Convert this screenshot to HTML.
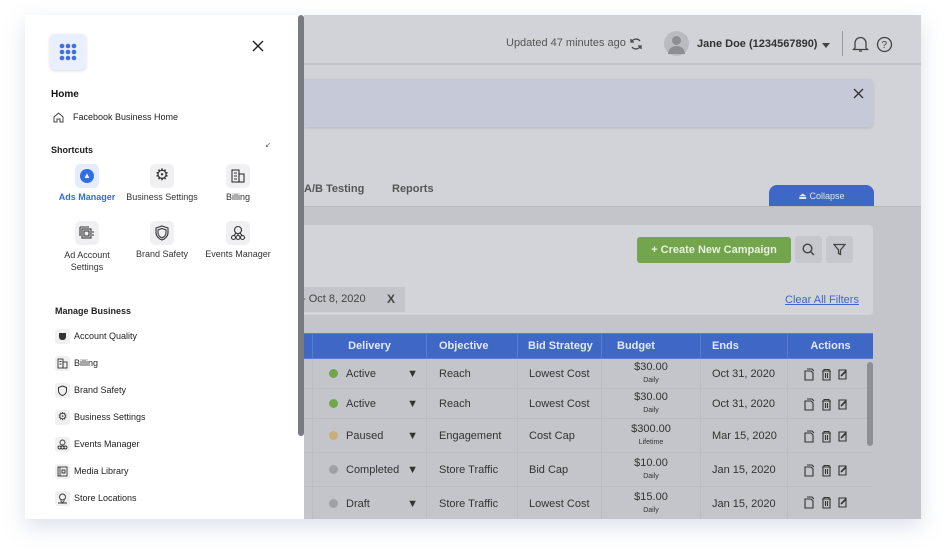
<!DOCTYPE html><html><head><style>
*{margin:0;padding:0;box-sizing:border-box}
body{width:947px;height:554px;background:#fff;font-family:"Liberation Sans",sans-serif;position:relative;overflow:hidden}
.a{position:absolute}
.win{left:25px;top:15px;width:896px;height:504px;background:#d2d3d9;box-shadow:0 8px 20px rgba(120,140,180,.25);overflow:hidden}
.side{left:25px;top:15px;width:279px;height:504px;background:#fff}
.ico{width:24px;height:24px;background:#f0f0f2;border-radius:5px}
.sm{width:15px;height:15px;background:#f0f0f2;border-radius:3px}
.tw{left:300px;top:333px;width:573px;height:186px;overflow:hidden}
table{border-collapse:collapse;table-layout:fixed;width:573px;font-size:11px;color:#333}
th,td{border:1px solid #bcbdc4;overflow:hidden;white-space:nowrap}
th{background:#3f67c6;color:#e3e8f5;height:25px;font-weight:bold;border-color:#5a7bd0;padding:0}
td{height:30px;text-align:left;padding:0 0 0 12px}
.dot{display:inline-block;width:9px;height:9px;border-radius:50%;margin-right:8px;vertical-align:-1px}
.b{text-align:center;padding:0;font-size:11px;line-height:11px}
.b small{font-size:7px;display:block;margin-top:2px}
</style></head><body>
<div class="a win"></div>
<!-- top bar -->
<div class="a" style="left:304px;top:63px;width:617px;height:2px;background:#c3c4ca"></div>
<div class="a" style="left:506px;top:37px;font-size:11px;color:#555">Updated 47 minutes ago</div>
<svg class="a" style="left:629px;top:37px" width="14" height="14" viewBox="0 0 14 14" fill="none" stroke="#444" stroke-width="1.3"><path d="M11 4A5 5 0 0 0 2.5 5M3 10A5 5 0 0 0 11.5 9"/><path d="M2 2v3h3M12 12V9H9"/></svg>
<div class="a" style="left:664px;top:31px;width:25px;height:25px;border-radius:50%;background:#babbc1;overflow:hidden"></div>
<div class="a" style="left:672px;top:36px;width:9px;height:9px;border-radius:50%;background:#8d8e94"></div>
<div class="a" style="left:668px;top:46px;width:17px;height:8px;border-radius:8px 8px 0 0;background:#8d8e94"></div>
<div class="a" style="left:697px;top:38px;font-size:11px;color:#333;font-weight:bold">Jane Doe (1234567890)</div>
<div class="a" style="left:822px;top:43px;border:4px solid transparent;border-top:5px solid #444"></div>
<div class="a" style="left:842px;top:31px;width:1px;height:25px;background:#999"></div>
<svg class="a" style="left:852px;top:35px" width="17" height="18" viewBox="0 0 17 18" fill="none" stroke="#444" stroke-width="1.3"><path d="M3 13V8a5.5 5.5 0 0 1 11 0v5l1.5 1.5h-14z"/><path d="M7 16h3"/></svg>
<svg class="a" style="left:876px;top:36px" width="17" height="17" viewBox="0 0 17 17" fill="none" stroke="#444" stroke-width="1.3"><circle cx="8.5" cy="8.5" r="7"/><text x="5.5" y="12" font-size="10" fill="#444" stroke="none" font-family="Liberation Sans">?</text></svg>
<!-- banner -->
<div class="a" style="left:304px;top:79px;width:569px;height:48px;background:#c5c9d8;border-radius:0 4px 4px 0;box-shadow:0 1px 3px rgba(0,0,0,.12)"></div>
<svg class="a" style="left:853px;top:88px" width="11" height="11" stroke="#333" stroke-width="1.3"><path d="M1 1l9 9M10 1L1 10"/></svg>
<!-- tabs -->
<div class="a" style="left:304px;top:183px;font-size:11px;color:#555;font-weight:bold">A/B Testing</div>
<div class="a" style="left:392px;top:183px;font-size:11px;color:#555;font-weight:bold">Reports</div>
<div class="a" style="left:769px;top:185px;width:105px;height:22px;background:#3f67c6;border-radius:8px 8px 0 0;color:#dfe5f3;font-size:9px;text-align:center;line-height:22px">⏏ Collapse</div>
<div class="a" style="left:304px;top:206px;width:617px;height:313px;background:#c4c5ca;border-top:1px solid #b9babf"></div>
<div class="a" style="left:304px;top:225px;width:569px;height:90px;background:#d3d4da;border-radius:0 4px 4px 0"></div>
<div class="a" style="left:637px;top:237px;width:154px;height:26px;background:#72a54c;border-radius:3px;color:#e8f0e0;font-size:11px;font-weight:bold;text-align:center;line-height:26px">+ Create New Campaign</div>
<div class="a" style="left:795px;top:236px;width:27px;height:27px;background:#c6c7cc;border-radius:3px"></div>
<svg class="a" style="left:802px;top:243px" width="13" height="13" fill="none" stroke="#444" stroke-width="1.4"><circle cx="5.5" cy="5.5" r="4.3"/><path d="M8.5 8.5l3.5 3.5"/></svg>
<div class="a" style="left:826px;top:236px;width:27px;height:27px;background:#c6c7cc;border-radius:3px"></div>
<svg class="a" style="left:833px;top:243px" width="13" height="13" fill="none" stroke="#444" stroke-width="1.3"><path d="M1 1.5h11L7.5 7v4.5l-2-1V7z"/></svg>
<div class="a" style="left:304px;top:287px;width:101px;height:25px;background:#c4c5ca"></div>
<div class="a" style="left:302px;top:293px;font-size:11px;color:#444">- Oct 8, 2020</div>
<div class="a" style="left:387px;top:292px;font-size:12px;color:#444;font-weight:bold">X</div>
<div class="a" style="left:785px;top:294px;font-size:11px;color:#3f67c6;text-decoration:underline">Clear All Filters</div>
<!-- table -->
<div class="a tw">
<table>
<colgroup><col style="width:12px"><col style="width:114px"><col style="width:91px"><col style="width:84px"><col style="width:99px"><col style="width:87px"><col style="width:86px"></colgroup>
<tr><th></th><th>Delivery</th><th style="text-align:left;padding-left:12px">Objective</th><th style="text-align:left;padding-left:10px">Bid Strategy</th><th style="text-align:left;padding-left:15px">Budget</th><th style="text-align:left;padding-left:11px">Ends</th><th>Actions</th></tr>
<tr><td></td><td style="padding-left:16px"><span class="dot" style="background:#72a54c"></span>Active<span style="float:right;margin-right:8px">▼</span></td><td>Reach</td><td style="padding-left:11px">Lowest Cost</td><td class="b">$30.00<small>Daily</small></td><td style="padding-left:11px">Oct 31, 2020</td><td></td></tr>
<tr><td></td><td style="padding-left:16px"><span class="dot" style="background:#72a54c"></span>Active<span style="float:right;margin-right:8px">▼</span></td><td>Reach</td><td style="padding-left:11px">Lowest Cost</td><td class="b">$30.00<small>Daily</small></td><td style="padding-left:11px">Oct 31, 2020</td><td></td></tr>
<tr><td style="height:34px"></td><td style="padding-left:16px"><span class="dot" style="background:#c9ad7a"></span>Paused<span style="float:right;margin-right:8px">▼</span></td><td>Engagement</td><td style="padding-left:11px">Cost Cap</td><td class="b">$300.00<small>Lifetime</small></td><td style="padding-left:11px">Mar 15, 2020</td><td></td></tr>
<tr><td style="height:34px"></td><td style="padding-left:16px"><span class="dot" style="background:#a0a1a6"></span>Completed<span style="float:right;margin-right:8px">▼</span></td><td>Store Traffic</td><td style="padding-left:11px">Bid Cap</td><td class="b">$10.00<small>Daily</small></td><td style="padding-left:11px">Jan 15, 2020</td><td></td></tr>
<tr><td style="height:34px"></td><td style="padding-left:16px"><span class="dot" style="background:#a0a1a6"></span>Draft<span style="float:right;margin-right:8px">▼</span></td><td>Store Traffic</td><td style="padding-left:11px">Lowest Cost</td><td class="b">$15.00<small>Daily</small></td><td style="padding-left:11px">Jan 15, 2020</td><td></td></tr>
</table>
</div>
<div class="a" style="left:867px;top:362px;width:6px;height:84px;background:#8e8f94;border-radius:3px"></div>
<div class="a" style="left:873px;top:333px;width:48px;height:186px;background:#c4c5ca"></div>
<div id="acts"></div>
<script>
var ys=[374,404,436,470,502],h='';
ys.forEach(function(y){
h+='<svg class="a" style="left:803px;top:'+(y-6)+'px" width="48" height="13" fill="none" stroke="#333" stroke-width="1.1"><path d="M2 3h6l2 2v7H2z M4 1h5l2 2"/><path d="M19 3h9M21 3V1.5h5V3M20 3v9h7V3M22.5 5v5M24.5 5v5"/><path d="M36 2h7v9h-7z"/><path d="M38 8l5-5" stroke-width="1.6"/></svg>';});
document.getElementById('acts').innerHTML=h;
</script>
<!-- sidebar -->
<div class="a side"></div>
<div class="a" style="left:298px;top:15px;width:6px;height:421px;background:#7a7b80;border-radius:3px"></div>
<div class="a" style="left:50px;top:34px;width:36px;height:36px;background:#e9effc;border-radius:5px;box-shadow:0 1px 3px rgba(0,0,0,.15)"></div>
<svg class="a" style="left:58px;top:42px" width="20" height="20" fill="#3f6fe0"><circle cx="4" cy="4" r="2.3"/><circle cx="10" cy="4" r="2.3"/><circle cx="16" cy="4" r="2.3"/><circle cx="4" cy="10" r="2.3"/><circle cx="10" cy="10" r="2.3"/><circle cx="16" cy="10" r="2.3"/><circle cx="4" cy="16" r="2.3"/><circle cx="10" cy="16" r="2.3"/><circle cx="16" cy="16" r="2.3"/></svg>
<svg class="a" style="left:252px;top:40px" width="12" height="12" stroke="#222" stroke-width="1.4"><path d="M1 1l10 10M11 1L1 11"/></svg>
<div class="a" style="left:51px;top:89px;font-size:10px;font-weight:bold;color:#111">Home</div>
<svg class="a" style="left:53px;top:112px" width="11" height="11" fill="none" stroke="#444" stroke-width="1"><path d="M1 10V5l4.5-4L10 5v5H7V7H4v3z"/></svg>
<div class="a" style="left:73px;top:112px;font-size:9px;color:#222">Facebook Business Home</div>
<div class="a" style="left:51px;top:145px;font-size:9px;font-weight:bold;color:#222">Shortcuts</div>
<div class="a ico" style="left:75px;top:164px;background:#e5ecfb"></div>
<div class="a" style="left:80px;top:169px;width:14px;height:14px;border-radius:50%;background:#2f6ee6;color:#fff;font-size:8px;text-align:center;line-height:14px;font-weight:bold">▲</div>
<div class="a" style="left:48px;top:192px;width:78px;text-align:center;font-size:9px;font-weight:bold;color:#2f6ee6">Ads Manager</div>
<div class="a ico" style="left:150px;top:164px"></div><div class="a" style="left:150px;top:164px;width:24px;text-align:center;font-size:16px;line-height:24px;color:#333">⚙</div>
<div class="a" style="left:122px;top:192px;width:80px;text-align:center;font-size:9px;color:#333">Business Settings</div>
<div class="a ico" style="left:226px;top:164px"></div>
<svg class="a" style="left:230px;top:168px" width="16" height="16" fill="none" stroke="#333" stroke-width="1.1"><rect x="2" y="2" width="7" height="12"/><path d="M4 5h3M4 8h3M4 11h3"/><rect x="9" y="6" width="5" height="8"/></svg>
<div class="a" style="left:198px;top:192px;width:80px;text-align:center;font-size:9px;color:#333">Billing</div>
<div class="a ico" style="left:75px;top:221px"></div>
<svg class="a" style="left:79px;top:225px" width="16" height="16" fill="none" stroke="#333" stroke-width="1.1"><rect x="3" y="4" width="9" height="9"/><rect x="5" y="6" width="5" height="5"/><path d="M1 2h9M1 2v9M13 7h2M13 10h2"/></svg>
<div class="a" style="left:48px;top:249px;width:78px;text-align:center;font-size:9px;color:#333;line-height:12px">Ad Account<br>Settings</div>
<div class="a ico" style="left:150px;top:221px"></div>
<svg class="a" style="left:154px;top:225px" width="16" height="16" fill="none" stroke="#333" stroke-width="1.1"><path d="M8 1l6 2v5c0 3-3 6-6 7-3-1-6-4-6-7V3z"/><path d="M8 3.5l4 1.4v3.2c0 2-2 4-4 4.8-2-.8-4-2.8-4-4.8V4.9z"/></svg>
<div class="a" style="left:122px;top:249px;width:80px;text-align:center;font-size:9px;color:#333">Brand Safety</div>
<div class="a ico" style="left:226px;top:221px"></div>
<svg class="a" style="left:230px;top:225px" width="16" height="16" fill="none" stroke="#333" stroke-width="1.1"><circle cx="8" cy="5" r="3.5"/><circle cx="3.5" cy="12.5" r="2"/><circle cx="8" cy="12.5" r="2"/><circle cx="12.5" cy="12.5" r="2"/><path d="M6 8l-2 2.5M10 8l2 2.5M8 8.5v2"/></svg>
<div class="a" style="left:198px;top:249px;width:80px;text-align:center;font-size:9px;color:#333">Events Manager</div>
<div class="a" style="left:55px;top:306px;font-size:9px;font-weight:bold;color:#222">Manage Business</div>
<div class="a sm" style="left:55px;top:329px"></div><div class="a" style="left:59px;top:333px;width:7px;height:7px;background:#333;border-radius:0 0 3px 3px"></div>
<div class="a" style="left:74px;top:331px;font-size:9px;color:#222">Account Quality</div>
<div class="a sm" style="left:55px;top:356px"></div><svg class="a" style="left:57px;top:358px" width="11" height="11" fill="none" stroke="#333" stroke-width=".9"><rect x="1" y="1" width="5" height="9"/><rect x="6" y="4" width="4" height="6"/><path d="M2.5 3.5h2M2.5 6h2"/></svg>
<div class="a" style="left:74px;top:358px;font-size:9px;color:#222">Billing</div>
<div class="a sm" style="left:55px;top:383px"></div><svg class="a" style="left:57px;top:385px" width="11" height="11" fill="none" stroke="#333"><path d="M5.5 1l4 1.5v3.5c0 2-2 4-4 4.5-2-.5-4-2.5-4-4.5V2.5z"/></svg>
<div class="a" style="left:74px;top:385px;font-size:9px;color:#222">Brand Safety</div>
<div class="a sm" style="left:55px;top:410px"></div><div class="a" style="left:55px;top:410px;width:15px;font-size:11px;text-align:center;line-height:15px;color:#333">⚙</div>
<div class="a" style="left:74px;top:412px;font-size:9px;color:#222">Business Settings</div>
<div class="a sm" style="left:55px;top:437px"></div><svg class="a" style="left:57px;top:439px" width="11" height="11" fill="none" stroke="#333" stroke-width=".9"><circle cx="5.5" cy="3.5" r="2.5"/><circle cx="2.5" cy="8.5" r="1.5"/><circle cx="5.5" cy="8.5" r="1.5"/><circle cx="8.5" cy="8.5" r="1.5"/></svg>
<div class="a" style="left:74px;top:439px;font-size:9px;color:#222">Events Manager</div>
<div class="a sm" style="left:55px;top:464px"></div><svg class="a" style="left:57px;top:466px" width="11" height="11" fill="none" stroke="#333" stroke-width=".9"><rect x="1" y="1" width="9" height="9"/><path d="M3 1v9M5 4h3v3H5z"/></svg>
<div class="a" style="left:74px;top:466px;font-size:9px;color:#222">Media Library</div>
<div class="a sm" style="left:55px;top:491px"></div><svg class="a" style="left:57px;top:493px" width="11" height="11" fill="none" stroke="#333" stroke-width=".9"><circle cx="5.5" cy="4" r="3"/><path d="M1 10h9M3.5 7.5L5.5 10l2-2.5"/></svg>
<div class="a" style="left:74px;top:493px;font-size:9px;color:#222">Store Locations</div>
<div class="a" style="left:265px;top:141px;font-size:7px;color:#555">↙</div>
</body></html>
